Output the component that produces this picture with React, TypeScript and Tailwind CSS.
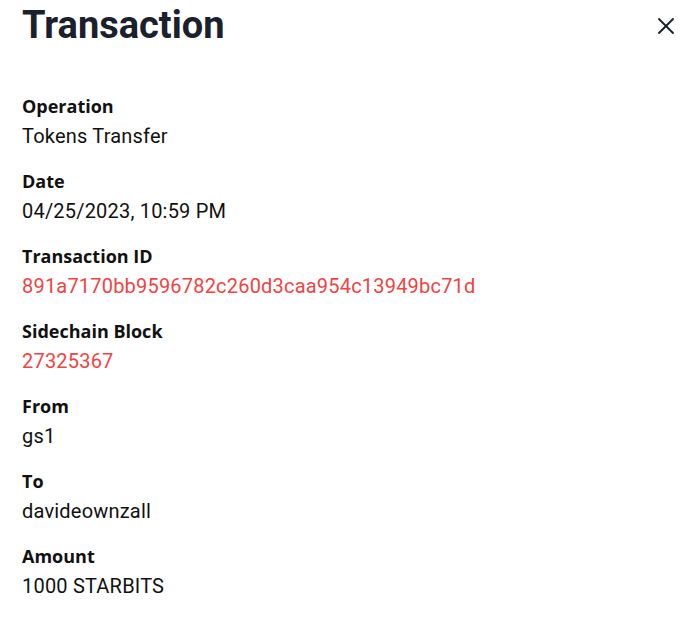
import { X } from 'lucide-react';

interface Field {
  label: string;
  value: string;
  link?: boolean;
}

const fields: Field[] = [
  { label: 'Operation', value: 'Tokens Transfer' },
  { label: 'Date', value: '04/25/2023, 10:59 PM' },
  { label: 'Transaction ID', value: '891a7170bb9596782c260d3caa954c13949bc71d', link: true },
  { label: 'Sidechain Block', value: '27325367', link: true },
  { label: 'From', value: 'gs1' },
  { label: 'To', value: 'davideownzall' },
  { label: 'Amount', value: '1000 STARBITS' },
];

const App = () => {
  return (
    <div className="w-[692px] h-[624px] bg-white px-[22px] font-['Open_Sans',sans-serif]">
      <div className="flex justify-between items-start pt-[2px]">
        <h1 className="text-[38px] leading-[46px] font-bold text-[#1a202c] font-['Roboto',sans-serif]">Transaction</h1>
        <button type="button" className="mt-[10px] mr-[-10px] text-[#1a202c]">
          <X size={28} strokeWidth={1.6} />
        </button>
      </div>

      <div className="mt-[43px]">
        {fields.map((f) => (
          <div key={f.label} className="mb-[15px] leading-[30px]">
            <div className="text-[18px] font-bold text-[#111]">{f.label}</div>
            <div className={`text-[20px] tracking-[0.2px] font-['Roboto',sans-serif] ${f.link ? 'text-[#ef4444]' : 'text-[#111]'}`}>{f.value}</div>
          </div>
        ))}
      </div>
    </div>
  );
};

export default App;
